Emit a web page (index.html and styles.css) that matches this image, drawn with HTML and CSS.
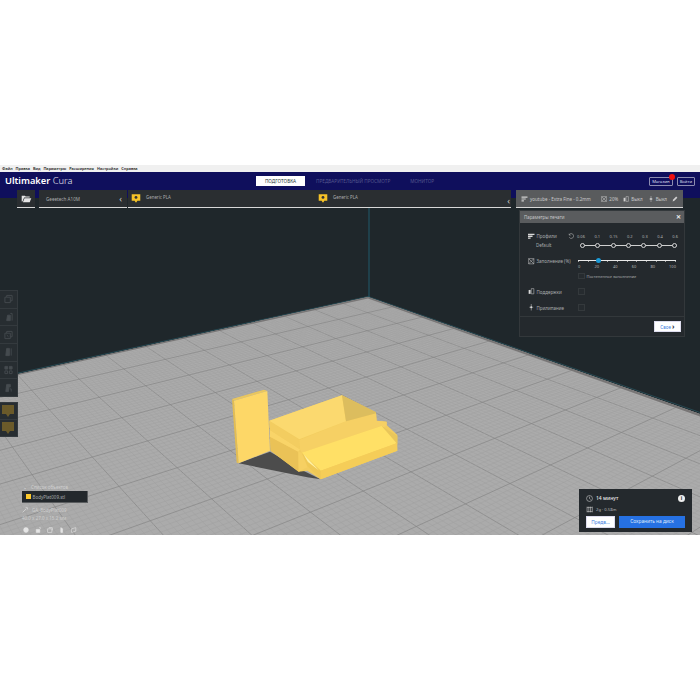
FILE: index.html
```html
<!DOCTYPE html>
<html lang="ru">
<head>
  <meta charset="UTF-8">
  <title>Ultimaker Cura</title>
  <link rel="stylesheet" href="styles.css">
</head>
<body>
  <div class="app">
    <div class="menubar">
      <span>Файл</span><span>Правка</span><span>Вид</span><span>Параметры</span><span>Расширения</span><span>Настройки</span><span>Справка</span>
    </div>

    <header class="header">
      <div class="logo"><b>Ultimaker</b> Cura</div>
      <nav class="tabs">
        <a class="tab active">ПОДГОТОВКА</a>
        <a class="tab">ПРЕДВАРИТЕЛЬНЫЙ ПРОСМОТР</a>
        <a class="tab">МОНИТОР</a>
      </nav>
      <div class="account">
        <a class="outline-btn market">Магазин<i class="badge"></i></a>
        <a class="outline-btn">Войти</a>
      </div>
    </header>

    <div class="viewport">
      <svg class="scene" viewBox="0 198 700 337">
        <defs>
          <clipPath id="floor-clip"><polygon points="368,297 0,378 0,535 700,535 700,414"/></clipPath>
        </defs>
        <line x1="369" y1="208" x2="369" y2="297" stroke="#1f6f86" stroke-width="1" stroke-opacity="0.7"/>
        <polyline points="0,377 368,296.5 700,412.5" fill="none" stroke="#2b5f6c" stroke-width="1" stroke-opacity="0.6"/>
        <polygon points="368,297 0,378 0,535 700,535 700,414" fill="#ababab"/>
        <g id="grid" clip-path="url(#floor-clip)"></g>
        <polygon points="368,297 0,378 0,379 368,298.5 700,416.5 700,414" fill="#787676"/>
        <g transform="translate(220 380) scale(0.3333)">
          <polygon points="56,250 150,215 250,272 302,298 262,292" fill="#4c4c4c"/>
          <polygon points="36,57 132,29 142,33 42,62" fill="#e9c65f"/>
          <polygon points="36,57 42,62 56,250 50,248" fill="#e3bd52"/>
          <polygon points="42,62 142,33 150,212 56,250" fill="#fdd767"/>
          <polygon points="148,122 366,46 468,97 470,122 500,125 500,135 532,165 532,212 302,298 262,272 236,275 152,212" fill="#f2cc5e"/>
          <polygon points="150,170 235,215 236,275 152,212" fill="#eac257"/>
          <polygon points="235,215 250,220 262,262 236,275" fill="#f6d062"/>
          <polygon points="150,150 240,208 235,215 150,170" fill="#f9d468"/>
          <polygon points="148,122 238,180 240,208 150,150" fill="#f3cd60"/>
          <polygon points="238,180 378,124 468,100 470,122 500,125 500,138 245,218 240,208" fill="#f6d064"/>
          <polygon points="148,122 366,46 378,124 238,178" fill="#fbd96f"/>
          <polygon points="366,46 468,97 468,100 378,124" fill="#dcbd5e"/>
          <polygon points="485,138 532,168 532,192 500,195" fill="#e9c65a"/>
          <polygon points="245,218 485,138 530,190 302,272" fill="#ffe066"/>
          <polygon points="302,272 530,190 532,212 302,298" fill="#f5cd58"/>
          <polygon points="245,218 302,272 302,298 262,258" fill="#efc856"/>
          <polygon points="250,222 298,272 264,246" fill="#fff0a0"/>
        </g>
      </svg>

      <div class="toolbar tools">
        <a class="tool"><svg viewBox="0 0 10 10"><path d="M1 9V3h2V1h6v6H7v2zM3 3h4v4"/></svg></a>
        <a class="tool"><svg viewBox="0 0 10 10"><path class="solid" d="M3 9l1-6h3v6z"/><path d="M7 1h2v8"/></svg></a>
        <a class="tool"><svg viewBox="0 0 10 10"><path d="M1 3h6v6H1zM3 3V1h6v6H7M3 5l2 2"/></svg></a>
        <a class="tool"><svg viewBox="0 0 10 10"><path class="solid" d="M3 1h3v8H2z"/><path d="M8 1v8"/></svg></a>
        <a class="tool"><svg viewBox="0 0 10 10"><path class="solid" d="M1 1h3v3H1zM6 1h3v3H6z"/><path d="M1 6h3v3H1zM6 6h3v3H6z"/></svg></a>
        <a class="tool"><svg viewBox="0 0 10 10"><path class="solid" d="M3 1h4v3H5v5H2z"/><path d="M6 6h2v3"/></svg></a>
      </div>
      <div class="toolbar extruders">
        <a class="tool"><svg viewBox="0 0 12 12"><path class="nozzle" d="M0 0h12v9H8l-2 3-2-3H0z"/></svg></a>
        <a class="tool"><svg viewBox="0 0 12 12"><path class="nozzle" d="M0 0h12v9H8l-2 3-2-3H0z"/></svg></a>
      </div>

      <div class="objects">
        <div class="objects-title"><span class="caret">⌄</span>Список объектов</div>
        <div class="object-item"><i class="swatch"></i>BodyPlat009.stl</div>
        <div class="object-name"><svg viewBox="0 0 10 10"><path d="M1 9l6-6M6 1h3v3"/></svg>GA_BodyPlat009</div>
        <div class="object-size">40.0 x 27.0 x 15.2 мм</div>
        <div class="object-actions">
          <svg viewBox="0 0 10 10"><circle class="solid" cx="5" cy="5" r="4"/></svg>
          <svg viewBox="0 0 10 10"><path class="solid" d="M2 4h6v5H2z"/><path d="M7 1h2v2"/></svg>
          <svg viewBox="0 0 10 10"><path d="M1 3h7v6H1zM3 1h6v5"/></svg>
          <svg viewBox="0 0 10 10"><path class="solid" d="M3 1l3 2v6H3z"/></svg>
          <svg viewBox="0 0 10 10"><path d="M1 3l7-2v6l-7 2z"/></svg>
        </div>
      </div>

      <div class="summary">
        <div class="summary-row">
          <svg class="summary-icon" viewBox="0 0 10 10"><circle cx="5" cy="5" r="4.2"/><path d="M5 2.4V5l1.6 1.4"/></svg>
          <span class="summary-time">14 минут</span>
          <i class="info">i</i>
        </div>
        <div class="summary-row small">
          <svg class="summary-icon" viewBox="0 0 10 10"><path d="M1.5 1v8M4 1v8M6.500 1v8M9 1v8M1.500 2h7.500M1.500 8h7.500"/></svg>
          <span>2g · 0.58m</span>
        </div>
        <div class="summary-actions">
          <a class="btn-light">Предв...</a>
          <a class="btn-blue">Сохранить на диск</a>
        </div>
      </div>
    </div>

    <div class="printer-bar">
      <a class="open-btn">
        <svg viewBox="0 0 12 10"><path d="M0 1h4l1 1h5v1H3L1 8H0z"/><path d="M3.500 4H12l-2 5H1.500z"/></svg>
      </a>
      <div class="machine"><span>Geeetech A10M</span><span class="chev">‹</span></div>
      <div class="materials">
        <div class="material"><svg viewBox="0 0 14 14"><path d="M1 1h12v9H9l-2 3-2-3H1z"/><circle cx="7" cy="5.500" r="2" fill="#333"/></svg>Generic PLA</div>
        <div class="material"><svg viewBox="0 0 14 14"><path d="M1 1h12v9H9l-2 3-2-3H1z"/><circle cx="7" cy="5.500" r="2" fill="#333"/></svg>Generic PLA<span class="chev">‹</span></div>
      </div>
      <div class="profile-btn">
        <svg class="stack" viewBox="0 0 10 10"><path d="M0 1h10v2H0zM0 4h7v2H0zM0 7h4v2H0z"/></svg>
        <span class="profile-name">youtube - Extra Fine - 0.2mm</span>
        <svg class="pic" viewBox="0 0 10 10"><path class="line" d="M1 1h8v8H1zM1 1l8 8M9 1L1 9"/></svg><span>20%</span>
        <svg class="pic" viewBox="0 0 10 10"><path d="M1 3h3v6H1z"/><path class="line" d="M5 1h4v8H5z"/></svg><span>Выкл</span>
        <svg class="pic" viewBox="0 0 10 10"><path class="line" d="M5 0v10M2 5h6"/><circle cx="5" cy="5" r="1.500"/></svg><span>Выкл</span>
        <svg class="pic pen" viewBox="0 0 10 10"><path d="M1 9l1-3 5-5 2 2-5 5z"/></svg>
      </div>
    </div>

    <section class="settings">
      <div class="settings-title"><span>Параметры печати</span><span class="close">✕</span></div>
      <div class="settings-body">
        <div class="row profile-row">
          <div class="row-label"><svg viewBox="0 0 10 10"><path d="M0 1h10v2H0zM0 4h7v2H0zM0 7h4v2H0z"/></svg>Профили</div>
          <div class="row-reset"><svg viewBox="0 0 10 10"><path d="M2 3a4 4 0 1 1 0 4M2 1v2.500h2.500"/></svg></div>
          <div class="scale">
            <span>0.06</span><span>0.1</span><span>0.15</span><span>0.2</span><span>0.3</span><span>0.4</span><span>0.6</span>
          </div>
        </div>
        <div class="row default-row">
          <div class="row-label plain">Default</div>
          <div class="track">
            <i></i><i></i><i></i><i></i><i></i><i></i><i></i>
          </div>
        </div>
        <div class="row infill-row">
          <div class="row-label"><svg viewBox="0 0 10 10"><path class="line" d="M1 1h8v8H1zM1 1l8 8M9 1L1 9"/></svg>Заполнение (%)</div>
          <div class="infill">
            <div class="ticks"><b class="handle"></b></div>
            <div class="scale">
              <span>0</span><span>20</span><span>40</span><span>60</span><span>80</span><span>100</span>
            </div>
          </div>
        </div>
        <div class="row gradual-row"><i class="check"></i>Постепенное заполнение</div>
        <div class="row option-row">
          <div class="row-label"><svg viewBox="0 0 10 10"><path d="M1 3h3v6H1z"/><path class="line" d="M5 1h4v8H5z"/></svg>Поддержки</div>
          <i class="check"></i>
        </div>
        <div class="row option-row adhesion">
          <div class="row-label"><svg viewBox="0 0 10 10"><path class="line" d="M5 0v10M2 5h6"/><circle cx="5" cy="5" r="1.500"/></svg>Прилипание</div>
          <i class="check"></i>
        </div>
      </div>
      <div class="settings-foot"><a class="btn-light custom">Свое <span>›</span></a></div>
    </section>
  </div>
  <script src="script.js"></script>
</body>
</html>
```

FILE: styles.css
```css
* {
  box-sizing: border-box;
}

body {
  margin: 0;
  padding-top: 165px;
  background-color: #fff;
  font-family: "Noto Sans", "Liberation Sans", sans-serif;
  font-size: 4.5px;
  color: #c8cacb;
}

svg {
  display: block;
}

.app {
  position: relative;
  height: 370px;
  display: flex;
  flex-direction: column;
  overflow: hidden;
}

.menubar {
  height: 7px;
  background-color: #f0f0f0;
  color: #222;
  display: flex;
  align-items: center;
  gap: 3px;
  padding-left: 2px;
  font-size: 3.900px;
  font-weight: 600;
  line-height: 7px;
}

.header {
  height: 26px;
  background-color: #0f0f5c;
  color: #fff;
  display: flex;
  padding: 0 5px;
  position: relative;
}

.logo {
  font-size: 9.300px;
  line-height: 18px;
  font-weight: 300;
  height: 18px;
  color: #e6e6ee;
}

.logo b {
  font-weight: 600;
  color: #fff;
}

.tabs {
  position: absolute;
  left: 256px;
  top: 4px;
  display: flex;
  height: 10px;
}

.tab {
  padding: 0 10px;
  font-size: 4.700px;
  line-height: 10px;
  color: #55588e;
}

.tab.active {
  background-color: #fff;
  color: #233;
  width: 49px;
  padding: 0;
  text-align: center;
  margin-right: 1px;
}

.account {
  margin-left: auto;
  display: flex;
  gap: 4px;
  padding: 5px 0 0;
  margin-right: 0;
}

.outline-btn {
  position: relative;
  height: 9px;
  padding: 0 2px;
  border: 1px solid #8c8cb0;
  border-radius: 1px;
  font-size: 4.200px;
  line-height: 7px;
  color: #dcdcec;
}

.badge {
  position: absolute;
  right: -3px;
  top: -4px;
  width: 6px;
  height: 6px;
  border-radius: 50%;
  background-color: #f10f10;
}

.viewport {
  flex: 1;
  position: relative;
  background-color: #1f272b;
}

.scene {
  position: absolute;
  left: 0;
  top: 0;
  width: 700px;
  height: 337px;
}

.toolbar {
  position: absolute;
  left: 0;
  width: 17.500px;
  background-color: #272d31;
  border: 1px solid #343a3e;
  border-left: none;
  display: flex;
  flex-direction: column;
}

.tools {
  top: 92px;
  height: 107px;
}

.extruders {
  top: 204px;
  height: 35px;
}

.tool {
  flex: 1;
  display: flex;
  align-items: center;
  justify-content: center;
  border-bottom: 1px solid #343a3e;
}

.tool:last-child {
  border-bottom: none;
}

.tool svg {
  width: 9px;
  height: 10px;
  fill: none;
  stroke: #454b4f;
  stroke-width: 1;
}

.tool .solid {
  fill: #454b4f;
}

.extruders .tool svg {
  width: 12px;
  height: 12px;
}

.tool .nozzle {
  fill: #6a5a2a;
  stroke: none;
}

.objects {
  position: absolute;
  left: 22px;
  top: 286px;
  width: 66px;
  color: #cfcfcf;
  line-height: 6px;
}

.objects-title {
  height: 7px;
  padding-left: 1px;
  display: flex;
  gap: 4px;
}

.caret {
  color: #ddd;
}

.object-item {
  height: 12px;
  background-color: #23282c;
  border: 1px solid #5a5d5f;
  border-width: 0 1px 1px 0;
  display: flex;
  align-items: center;
  gap: 2px;
  padding-left: 4px;
  color: #a5a9ab;
}

.swatch {
  width: 4.500px;
  height: 5px;
  background-color: #fdc92c;
}

.object-name {
  margin-top: 3px;
  height: 7px;
  display: flex;
  align-items: center;
  gap: 4px;
}

.object-name svg {
  width: 6px;
  height: 6px;
  fill: none;
  stroke: #e5e5e5;
}

.object-size {
  margin-top: 2px;
  height: 7px;
}

.object-actions {
  margin-top: 5px;
  display: flex;
  gap: 6px;
  padding-left: 1px;
}

.object-actions svg {
  width: 6px;
  height: 6px;
  fill: none;
  stroke: #e5e5e5;
  stroke-width: 1;
}

.object-actions .solid {
  fill: #e5e5e5;
}

.summary {
  position: absolute;
  left: 579px;
  top: 291px;
  width: 113px;
  height: 43px;
  background-color: #24292d;
  padding: 5px 7px;
  color: #e8e8e8;
}

.summary-row {
  display: flex;
  align-items: center;
  gap: 3px;
  height: 8px;
}

.summary-row.small {
  height: 8px;
  margin-top: 3px;
  font-size: 4.200px;
  color: #b8b8b8;
}

.summary-time {
  font-size: 5px;
  font-weight: 500;
}

.summary-icon {
  width: 7px;
  height: 7px;
  fill: none;
  stroke: #d2d2d2;
  stroke-width: 0.8;
}

.info {
  margin-left: auto;
  width: 7px;
  height: 7px;
  border-radius: 50%;
  background-color: #eee;
  color: #24292d;
  font-style: normal;
  font-weight: 700;
  font-size: 5px;
  line-height: 7px;
  text-align: center;
}

.summary-actions {
  margin-top: 3px;
  display: flex;
  gap: 4px;
}

.btn-light {
  background-color: #fff;
  color: #3f7ee0;
  border: 1px solid #dde;
  text-align: center;
}

.summary-actions .btn-light {
  width: 29px;
  height: 11.500px;
  line-height: 10px;
  font-size: 4.800px;
}

.btn-blue {
  width: 66px;
  height: 11.500px;
  background-color: #2671e3;
  color: #dce8fb;
  line-height: 11.500px;
  font-size: 4.800px;
  text-align: center;
}

.printer-bar {
  position: absolute;
  left: 17px;
  top: 25px;
  width: 666px;
  height: 18px;
  display: flex;
  color: #aaadae;
}

.printer-bar > * {
  flex: none;
  border-bottom: 1px solid #d8d8d8;
  height: 18px;
}

.open-btn {
  width: 18px;
  margin-right: 4px;
  background-color: #2a2e31;
  display: flex;
  align-items: center;
  justify-content: center;
}

.open-btn svg {
  width: 11px;
  height: 8px;
  fill: #e5e5e5;
}

.machine {
  width: 88px;
  margin-right: 1px;
  background-color: #2a2e31;
  display: flex;
  align-items: center;
  justify-content: space-between;
  padding: 0 5px 0 7px;
  font-size: 4.600px;
}

.chev {
  font-size: 9px;
  line-height: 9px;
  color: #ccc;
}

.materials {
  width: 383px;
  background-color: #2a2e31;
  display: flex;
}

.material {
  flex: 1;
  display: flex;
  gap: 5px;
  padding: 3px 0 0 3px;
  font-size: 4.400px;
  line-height: 8px;
}

.material:last-child {
  flex: 0 0 196px;
}

.material svg {
  width: 10px;
  height: 11px;
  fill: #f6c327;
}

.material .chev {
  margin-left: auto;
  padding: 3px 1px 0 0;
}

.profile-btn {
  margin-left: 5px;
  width: 167px;
  background-color: #595b5d;
  color: #c9cacb;
  display: flex;
  align-items: center;
  padding: 0 3px 0 5px;
  font-size: 4.500px;
  white-space: nowrap;
}

.profile-btn svg {
  flex: none;
  fill: #d0d0d0;
}

.profile-btn .stack {
  width: 7px;
  height: 6px;
  margin-right: 2px;
}

.profile-name {
  width: 71px;
}

.profile-btn .pic {
  width: 6px;
  height: 6px;
  margin-right: 2px;
}

.profile-btn span + .pic {
  margin-left: 5px;
}

.profile-btn .pen {
  margin-left: 6px;
}

.profile-btn .line,
.row-label .line {
  fill: none;
  stroke: #cfcfcf;
  stroke-width: 0.8;
}

.settings {
  position: absolute;
  left: 519px;
  top: 45px;
  width: 166px;
  height: 127px;
  background-color: #24292d;
  border: 1px solid #33383b;
  display: flex;
  flex-direction: column;
}

.settings-title {
  height: 12px;
  flex: none;
  background-color: #5a5c5e;
  color: #c6c7c8;
  display: flex;
  align-items: center;
  justify-content: space-between;
  padding: 0 3px 0 4px;
  font-size: 4.400px;
}

.close {
  font-size: 6px;
  font-weight: 700;
  color: #eee;
}

.settings-body {
  flex: 1;
  position: relative;
  padding: 9px 0 0 8px;
  color: #a9acae;
}

.row {
  display: flex;
  align-items: center;
}

.row-label {
  width: 40px;
  flex: none;
  display: flex;
  align-items: center;
  gap: 2px;
  color: #a9acae;
  white-space: nowrap;
}

.row-label svg {
  width: 6.500px;
  height: 6.500px;
  fill: #d8d8d8;
  flex: none;
}

.row-label.plain {
  padding-left: 8px;
  width: 50px;
}

.profile-row {
  height: 8px;
}

.row-reset {
  width: 10px;
  flex: none;
}

.row-reset svg {
  width: 6px;
  height: 6px;
  fill: none;
  stroke: #bbb;
  stroke-width: 0.9;
}

.scale {
  flex: 1;
  display: flex;
  justify-content: space-between;
  font-size: 4px;
  color: #b0b2b3;
}

.profile-row .scale {
  margin-left: -1px;
  margin-right: 6px;
}

.default-row {
  height: 8px;
  margin-top: 1px;
}

.track {
  width: 97px;
  margin-left: 2px;
  height: 5px;
  display: flex;
  justify-content: space-between;
  background: linear-gradient(#d0d0d0, #d0d0d0) center / 100% 1px no-repeat;
}

.track i {
  width: 5px;
  height: 5px;
  border-radius: 50%;
  border: 1px solid #d4d4d4;
  background-color: #24292d;
}

.infill-row {
  height: 12px;
  margin-top: 9px;
  align-items: flex-start;
}

.infill {
  width: 98px;
  margin-left: 10px;
}

.ticks {
  position: relative;
  height: 5px;
  background:
    linear-gradient(#e8e8e8, #e8e8e8) center / 100% 1px no-repeat,
    repeating-linear-gradient(90deg, #a0a0a0 0 1px, transparent 1px 9.700px) left center / 100% 2px no-repeat;
}

.handle {
  position: absolute;
  left: 17.500px;
  top: 0;
  width: 5px;
  height: 5px;
  border-radius: 50%;
  background-color: #1b9ad6;
}

.infill .scale {
  margin-top: 1px;
  line-height: 5px;
}

.gradual-row {
  margin: 3px 0 0 50px;
  height: 6px;
  gap: 2px;
  font-size: 4px;
}

.check {
  width: 6.500px;
  height: 6.500px;
  border: 1px solid #34393c;
  background-color: #262b2f;
  flex: none;
}

.option-row {
  margin-top: 9px;
  height: 7px;
}

.option-row .check {
  margin-left: 10px;
}

.option-row.adhesion {
  margin-top: 9px;
}

.settings-foot {
  height: 20px;
  flex: none;
  border-top: 1px solid #33383b;
  display: flex;
  justify-content: flex-end;
  padding: 4px 3px 0 0;
}

.custom {
  width: 27px;
  height: 11px;
  font-size: 4.500px;
  line-height: 9px;
}

.custom span {
  color: #223;
  font-weight: 700;
  font-size: 7px;
}
```

FILE: script.js
```js
// floor grid of the build plate, drawn from the two vanishing points of the view
const corner = [368, 297];
const vpLeft = [-245, 86];
const vpRight = [1406, 73];
const stepAlongLeft = 0.0000244;
const stepAlongRight = 0.000069;
const grid = document.getElementById('grid');

const addLine = (from, through, color, width) => {
  const k = (560 - from[1]) / (through[1] - from[1]);
  const line = document.createElementNS('http://www.w3.org/2000/svg', 'line');
  line.setAttribute('x1', from[0]);
  line.setAttribute('y1', from[1]);
  line.setAttribute('x2', from[0] + (through[0] - from[0]) * k);
  line.setAttribute('y2', 560);
  line.setAttribute('stroke', color);
  line.setAttribute('stroke-width', width);
  grid.appendChild(line);
};

const drawFamily = (vp, other, step) => {
  const dCorner = Math.abs(other[0] - corner[0]);
  for (let i = 1; i < 400; i++) {
    const inverse = 1 / dCorner - (i / 10) * step;
    if (inverse <= 0) break;
    const d = 1 / inverse;
    const t = d / dCorner;
    const point = [other[0] + (corner[0] - other[0]) * t, other[1] + (corner[1] - other[1]) * t];
    const major = i % 10 === 0;
    addLine(vp, point, major ? '#858585' : '#a0a0a0', major ? 0.7 : 0.5);
  }
};

// lines through vpLeft cross the back-left edge, which runs to vpRight, and the reverse
drawFamily(vpLeft, vpRight, stepAlongLeft);
drawFamily(vpRight, vpLeft, stepAlongRight);
```
